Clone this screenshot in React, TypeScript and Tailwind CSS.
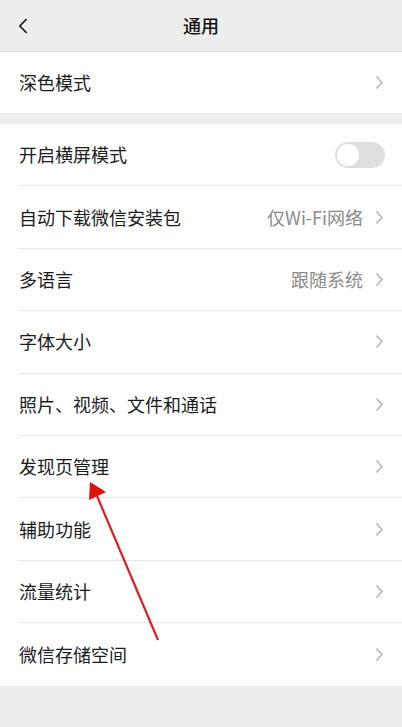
import { ChevronLeft } from "lucide-react";

type Row = { label: string; value?: string; toggle?: boolean };

const rows: Row[] = [
  { label: "开启横屏模式", toggle: true },
  { label: "自动下载微信安装包", value: "仅Wi-Fi网络" },
  { label: "多语言", value: "跟随系统" },
  { label: "字体大小" },
  { label: "照片、视频、文件和通话" },
  { label: "发现页管理" },
  { label: "辅助功能" },
  { label: "流量统计" },
  { label: "微信存储空间" },
];

function Chevron() {
  return (
    <svg width="9" height="15" viewBox="0 0 9 15" className="shrink-0">
      <path d="M1.5 1.5 L7 7.5 L1.5 13.5" fill="none" stroke="#b5b5b5" strokeWidth="1.5" />
    </svg>
  );
}

function SettingRow({ row, last }: { row: Row; last?: boolean }) {
  return (
    <div className="pl-[19px] bg-white">
      <div
        className={`h-[62.4px] flex items-center justify-between pr-[18px] ${
          last ? "" : "border-b border-[#e8e8e8]"
        }`}
      >
        <span className="text-[18px] text-[#1b1b1b]">{row.label}</span>
        {row.toggle ? (
          <div className="w-[50px] h-[26px] rounded-full bg-[#dedede] p-[2px] flex items-center -mr-[1px]">
            <div className="w-[22px] h-[22px] rounded-full bg-white" />
          </div>
        ) : (
          <div className="flex items-center gap-[12px]">
            {row.value && <span className="text-[18px] text-[#8a8a8a]">{row.value}</span>}
            <Chevron />
          </div>
        )}
      </div>
    </div>
  );
}

export default function App() {
  return (
    <div
      className="relative w-[402px] h-[727px] bg-[#ededed] overflow-hidden"
      style={{ fontFamily: '"Noto Sans CJK SC", "Noto Sans", sans-serif' }}
    >
      {/* header */}
      <div className="h-[52px] flex items-center relative border-b border-[#dcdcdc]">
        <ChevronLeft className="absolute left-[10px] text-[#111]" size={26} strokeWidth={1.5} />
        <div className="flex-1 text-center text-[18px] font-medium text-[#111]">通用</div>
      </div>

      <div className="bg-white">
        <div className="h-[61px] pl-[19px] pr-[18px] flex items-center justify-between">
          <span className="text-[18px] text-[#1b1b1b]">深色模式</span>
          <Chevron />
        </div>
      </div>

      <div className="h-[11px]" />

      <div>
        {rows.map((r, i) => (
          <SettingRow key={i} row={r} last={i === rows.length - 1} />
        ))}
      </div>

      {/* annotation arrow */}
      <svg className="absolute left-0 top-0 pointer-events-none" width="402" height="727">
        <line x1="158" y1="640" x2="97" y2="496" stroke="#d91f1f" strokeWidth="2.2" />
        <polygon points="90,482 106,492 89,500" fill="#e01010" />
      </svg>
    </div>
  );
}
